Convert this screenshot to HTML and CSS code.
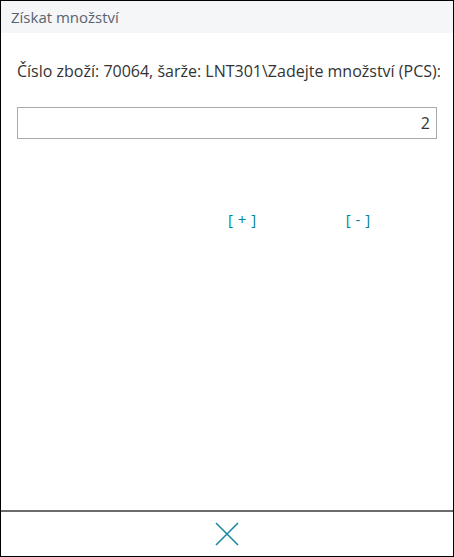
FILE: index.html
```html
<!DOCTYPE html>
<html lang="cs">

<head>
    <meta charset="UTF-8" />
    <meta name="viewport" content="width=device-width, initial-scale=1.0" />
    <title>Získat množství</title>
    <link rel="stylesheet" href="styles.css">
</head>

<body>
    <div class="dialog">
        <div class="dialog-header">Získat množství</div>

        <div class="dialog-body">
            <p class="prompt">Číslo zboží: 70064, šarže: LNT301\Zadejte množství (PCS):</p>
            <input class="qty-input" type="text" value="2" />

            <div class="step-row">
                <button class="step-btn" type="button">[ + ]</button>
                <button class="step-btn" type="button">[ - ]</button>
            </div>
        </div>

        <div class="dialog-footer">
            <button class="close-btn" type="button" aria-label="Zavřít">
                <svg width="24" height="24" viewBox="0 0 24 24">
                    <path d="M1 1 L23 23 M23 1 L1 23" stroke="#1a8aa0" stroke-width="1.6" fill="none" />
                </svg>
            </button>
        </div>
    </div>
</body>

</html>
```

FILE: styles.css
```css
*,
*::before,
*::after {
    box-sizing: border-box;
    margin: 0;
    padding: 0;
}

html,
body {
    height: 100%;
    font-family: 'Segoe UI', 'Open Sans', 'Noto Sans', sans-serif;
    background: #fff;
    color: #333;
}

.dialog {
    height: 100%;
    display: flex;
    flex-direction: column;
    border: 1px solid #000;
}

.dialog-header {
    height: 32px;
    background: #f5f6f8;
    color: #5a6270;
    font-size: 15px;
    line-height: 32px;
    padding-left: 10px;
}

.dialog-body {
    flex: 1;
    padding: 0 16px;
}

.prompt {
    margin-top: 26px;
    font-size: 16px;
    line-height: 24px;
    white-space: nowrap;
}

.qty-input {
    display: block;
    width: 100%;
    height: 32px;
    margin-top: 24px;
    border: 1px solid #aaa;
    padding: 0 6px;
    font: inherit;
    font-size: 16px;
    color: #333;
    text-align: right;
}

.step-row {
    display: flex;
    margin-top: 70px;
    padding-left: 167px;
}

.step-btn {
    width: 116px;
    background: none;
    border: none;
    font: inherit;
    font-size: 15px;
    word-spacing: 1px;
    color: #00869a;
    text-align: center;
    cursor: pointer;
}

.dialog-footer {
    height: 46px;
    border-top: 2px solid #6b6b6b;
    display: flex;
    justify-content: center;
    align-items: center;
}

.close-btn {
    background: none;
    border: none;
    display: flex;
    cursor: pointer;
}
```
